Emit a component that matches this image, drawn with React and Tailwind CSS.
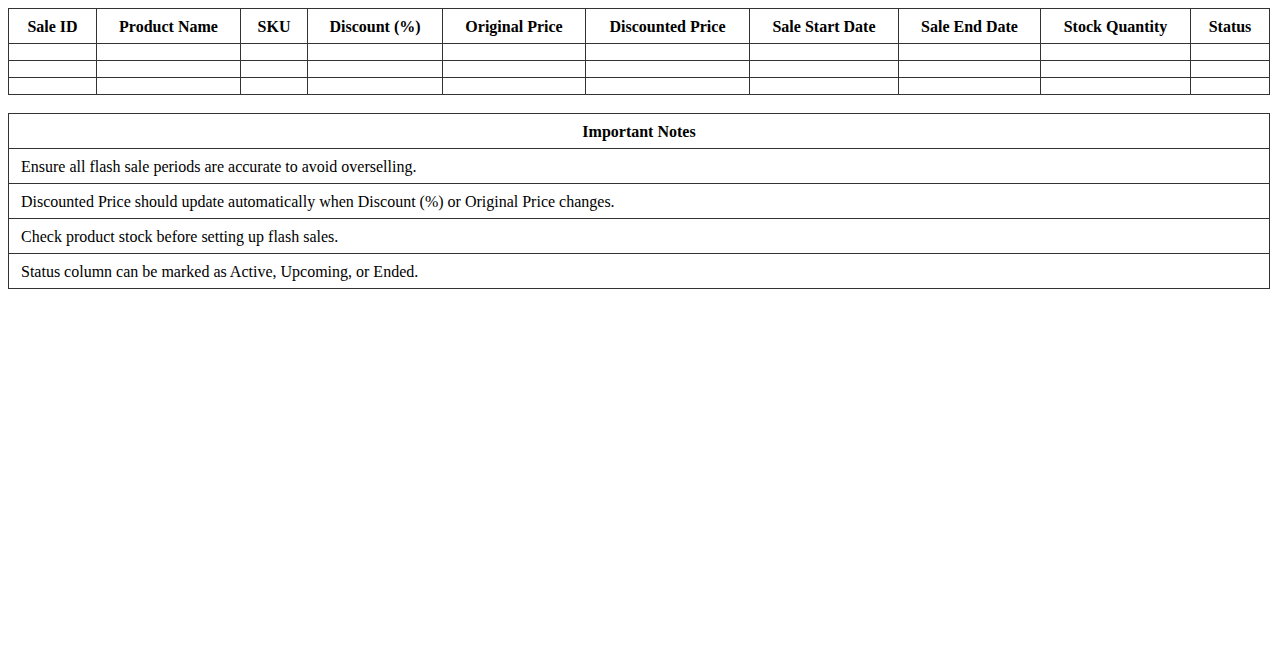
export default function App() {
  const headers = [
    ["Sale ID", "w-[88px]"],
    ["Product Name", "w-[144px]"],
    ["SKU", "w-[67px]"],
    ["Discount (%)", "w-[135px]"],
    ["Original Price", "w-[143px]"],
    ["Discounted Price", "w-[164px]"],
    ["Sale Start Date", "w-[149px]"],
    ["Sale End Date", "w-[142px]"],
    ["Stock Quantity", "w-[150px]"],
    ["Status", "w-[79px]"],
  ];
  const notes = [
    "Ensure all flash sale periods are accurate to avoid overselling.",
    "Discounted Price should update automatically when Discount (%) or Original Price changes.",
    "Check product stock before setting up flash sales.",
    "Status column can be marked as Active, Upcoming, or Ended.",
  ];
  return (
    <div className="m-2 text-black text-[16px] leading-[18px]" style={{ fontFamily: '"Liberation Serif", "Times New Roman", serif' }}>
      <table className="w-full border-collapse table-fixed border border-[#333]">
        <thead>
          <tr>
            {headers.map(([h, w]) => (
              <th key={h} className={`${w} border border-[#333] pt-[9px] pb-[7px] px-2 font-bold text-center`}>{h}</th>
            ))}
          </tr>
        </thead>
        <tbody>
          {[0, 1, 2].map((r) => (
            <tr key={r}>
              {headers.map(([h]) => (
                <td key={h} className="border border-[#333] p-2"></td>
              ))}
            </tr>
          ))}
        </tbody>
      </table>
      <table className="w-full border-collapse border border-[#333] mt-[18px]">
        <thead>
          <tr>
            <th className="border border-[#333] pt-[9px] pb-[7px] px-3 font-bold text-center">Important Notes</th>
          </tr>
        </thead>
        <tbody>
          {notes.map((n) => (
            <tr key={n}>
              <td className="border border-[#333] pt-[9px] pb-[7px] px-3 text-left">{n}</td>
            </tr>
          ))}
        </tbody>
      </table>
    </div>
  );
}
